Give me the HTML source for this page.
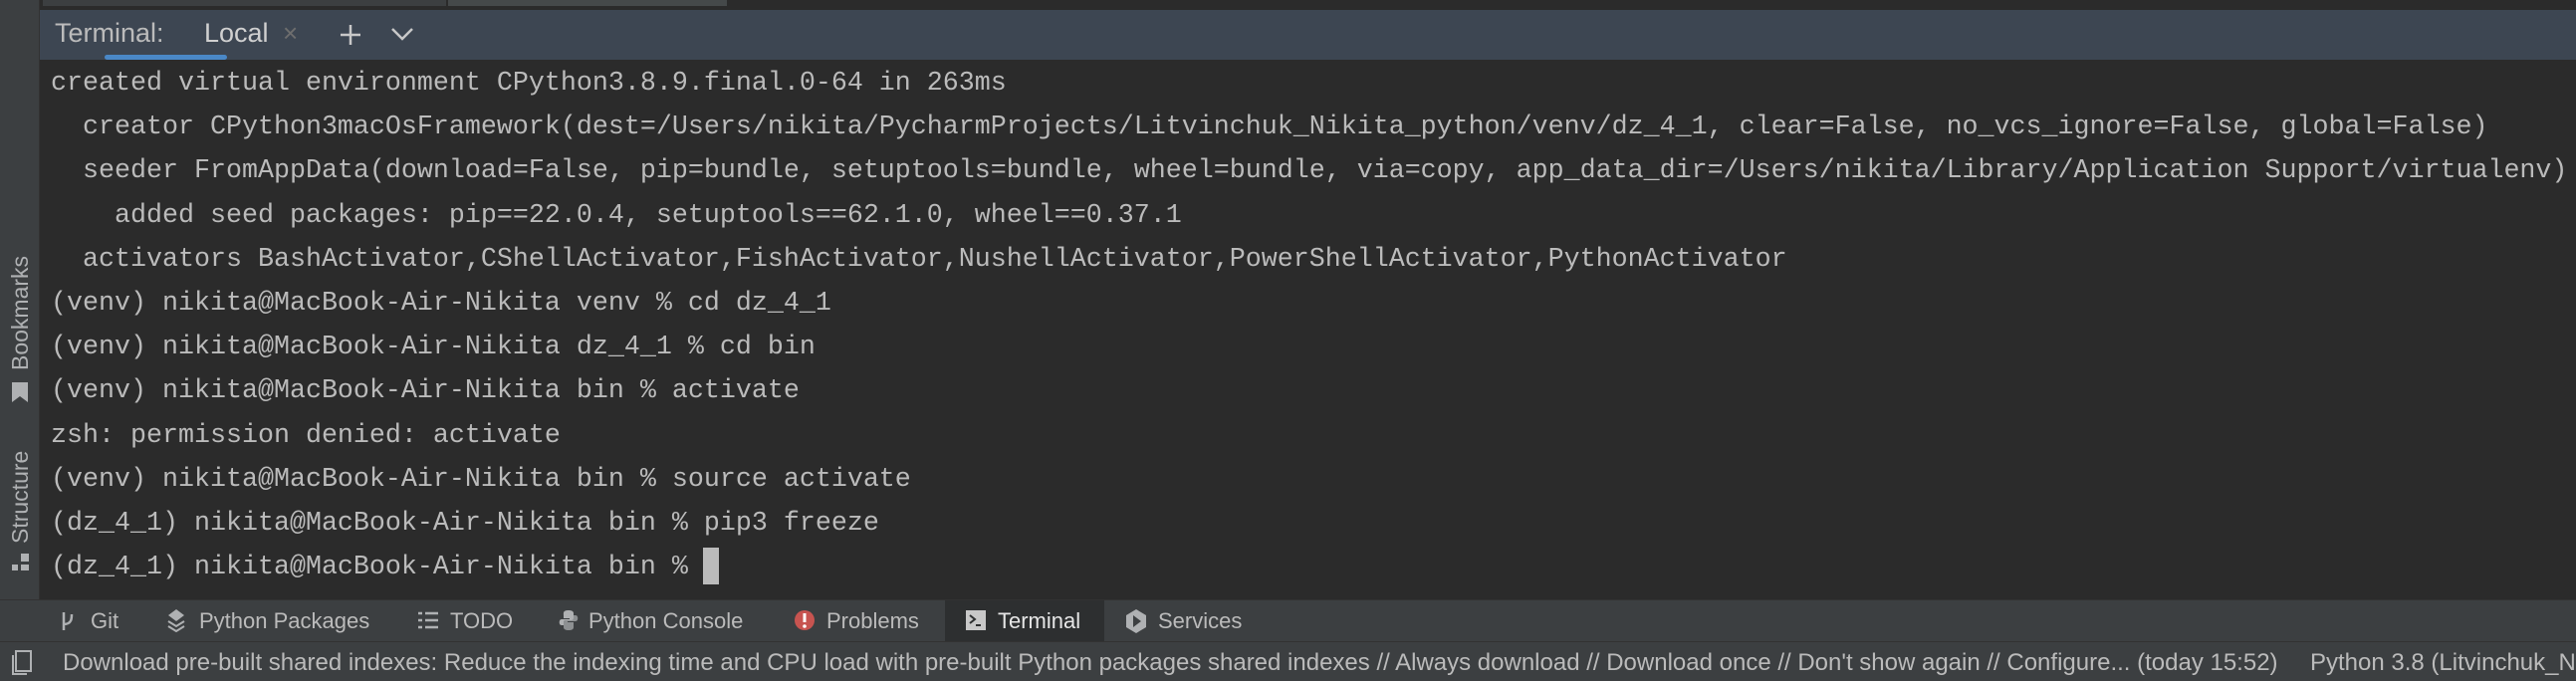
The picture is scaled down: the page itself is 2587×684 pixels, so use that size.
<!DOCTYPE html>
<html><head><meta charset="utf-8"><style>
*{margin:0;padding:0;box-sizing:border-box}
body{width:2587px;height:684px;overflow:hidden;background:#2b2b2b;position:relative;font-family:"Liberation Sans",sans-serif}
.abs{position:absolute}
#side{left:0;top:0;width:40px;height:644px;background:#3c3f41;border-right:1px solid #323232}
#top{left:40px;top:0;width:2547px;height:10px;background:#2b2b2b}
#hdr{left:40px;top:10px;width:2547px;height:50px;background:#3d4652}
.term{left:51px;top:62px;font-family:"Liberation Mono",monospace;font-size:26.67px;line-height:44.2px;color:#bbbbbb;white-space:pre}
#tool{left:0;top:602px;width:2587px;height:42px;background:#3c3f41;border-top:1px solid #323232}
#stat{left:0;top:644px;width:2587px;height:40px;background:#3c3f41;border-top:1px solid #323232;overflow:hidden}
.t{font-size:22px;color:#bbbbbb;white-space:nowrap}
.vt{transform:rotate(-90deg);transform-origin:left top;font-size:23px;color:#afb1b3;white-space:nowrap}
</style></head><body>
<div id="top" class="abs"><div class="abs" style="left:3px;top:0;width:405px;height:6px;background:#3c3f41"></div><div class="abs" style="left:410px;top:0;width:280px;height:6px;background:#45494a"></div></div>
<div id="side" class="abs">
 <div class="abs vt" style="left:7px;top:372px">Bookmarks</div>
 <svg class="abs" style="left:12px;top:384px" width="16" height="20"><path d="M0 0H16V20L8 14L0 20Z" fill="#afb1b3"/></svg>
 <div class="abs vt" style="left:7px;top:546px">Structure</div>
 <svg class="abs" style="left:12px;top:556px" width="18" height="18"><rect x="9" y="0" width="8" height="8" fill="#afb1b3"/><rect x="0" y="11" width="6" height="6" fill="#afb1b3"/><rect x="9" y="11" width="8" height="6" fill="#afb1b3"/></svg>
</div>
<div id="hdr" class="abs">
 <div class="abs t" style="left:15px;top:8px;font-size:27px">Terminal:</div>
 <div class="abs t" style="left:165px;top:8px;font-size:27px;color:#d0d0d0">Local</div>
 <div class="abs t" style="left:244px;top:8px;font-size:26px;color:#6e6e6e">×</div>
 <svg class="abs" style="left:300px;top:13px" width="24" height="24"><path d="M12 2V22M2 12H22" stroke="#c8c8c8" stroke-width="2.5"/></svg>
 <svg class="abs" style="left:352px;top:17px" width="24" height="15"><path d="M2 2L12 12L22 2" stroke="#c8c8c8" stroke-width="2.5" fill="none"/></svg>
 <div class="abs" style="left:65px;top:45px;width:123px;height:5px;background:#4a88c7;border-radius:3px"></div>
</div>
<div class="abs term">created virtual environment CPython3.8.9.final.0-64 in 263ms
  creator CPython3macOsFramework(dest=/Users/nikita/PycharmProjects/Litvinchuk_Nikita_python/venv/dz_4_1, clear=False, no_vcs_ignore=False, global=False)
  seeder FromAppData(download=False, pip=bundle, setuptools=bundle, wheel=bundle, via=copy, app_data_dir=/Users/nikita/Library/Application Support/virtualenv)
    added seed packages: pip==22.0.4, setuptools==62.1.0, wheel==0.37.1
  activators BashActivator,CShellActivator,FishActivator,NushellActivator,PowerShellActivator,PythonActivator
(venv) nikita@MacBook-Air-Nikita venv % cd dz_4_1
(venv) nikita@MacBook-Air-Nikita dz_4_1 % cd bin
(venv) nikita@MacBook-Air-Nikita bin % activate
zsh: permission denied: activate
(venv) nikita@MacBook-Air-Nikita bin % source activate
(dz_4_1) nikita@MacBook-Air-Nikita bin % pip3 freeze
(dz_4_1) nikita@MacBook-Air-Nikita bin % </div>
<div class="abs" style="left:706px;top:550px;width:16px;height:37px;background:#bbbbbb"></div>
<div id="tool" class="abs">
 <div class="abs" style="left:949px;top:0;width:160px;height:41px;background:#2d2f30"></div>
 <svg class="abs" style="left:60px;top:10px" width="16" height="22"><path d="M4 2V20M4 14C12 14 12 8 12 4" stroke="#afb1b3" stroke-width="2.5" fill="none"/></svg>
 <div class="abs t" style="left:91px;top:8px">Git</div>
 <svg class="abs" style="left:166px;top:8px" width="22" height="24"><path d="M11 1L19 7L11 13L3 7Z" fill="#afb1b3"/><path d="M3 13L11 18L19 13M3 18L11 23L19 18" stroke="#afb1b3" stroke-width="2" fill="none"/></svg>
 <div class="abs t" style="left:200px;top:8px">Python Packages</div>
 <svg class="abs" style="left:420px;top:11px" width="20" height="18"><path d="M0 2H4M7 2H20M0 9H4M7 9H20M0 16H4M7 16H20" stroke="#afb1b3" stroke-width="2.5"/></svg>
 <div class="abs t" style="left:452px;top:8px">TODO</div>
 <svg class="abs" style="left:560px;top:9px" width="22" height="22"><path d="M11 1C5 1 6 4 6 6V9H12V10H4C1 10 1 16 4 16H6V13C6 11 8 11 9 11H14C16 11 16 10 16 8V4C16 2 14 1 11 1Z" fill="#afb1b3"/><path d="M11 21C17 21 16 18 16 16V13H10V12H18C21 12 21 6 18 6H16V9C16 11 14 11 13 11H8C6 11 6 12 6 14V18C6 20 8 21 11 21Z" fill="#8d9092"/></svg>
 <div class="abs t" style="left:591px;top:8px">Python Console</div>
 <svg class="abs" style="left:797px;top:9px" width="22" height="22"><circle cx="11" cy="11" r="10" fill="#c75450"/><path d="M11 4V13" stroke="#fff" stroke-width="3"/><circle cx="11" cy="17" r="1.8" fill="#fff"/></svg>
 <div class="abs t" style="left:830px;top:8px">Problems</div>
 <svg class="abs" style="left:970px;top:10px" width="20" height="20"><rect width="20" height="20" fill="#c8c8c8"/><path d="M4 5L9 9L4 13M10 15H15" stroke="#2d2f30" stroke-width="2" fill="none"/></svg>
 <div class="abs t" style="left:1002px;top:8px;color:#e6e6e6">Terminal</div>
 <svg class="abs" style="left:1130px;top:9px" width="22" height="24"><path d="M11 0L21 6V18L11 24L1 18V6Z" fill="#afb1b3"/><path d="M8 6L16 12L8 18Z" fill="#3c3f41"/></svg>
 <div class="abs t" style="left:1163px;top:8px">Services</div>
</div>
<div id="stat" class="abs">
 <svg class="abs" style="left:12px;top:8px" width="22" height="26"><rect x="4" y="1" width="15" height="20" fill="none" stroke="#afb1b3" stroke-width="2"/><path d="M1 5V24H15" stroke="#afb1b3" stroke-width="2" fill="none"/></svg>
 <div class="abs t" style="left:63px;top:7px;font-size:24px">Download pre-built shared indexes: Reduce the indexing time and CPU load with pre-built Python packages shared indexes // Always download // Download once // Don't show again // Configure... (today 15:52)</div>
 <div class="abs t" style="left:2320px;top:7px;font-size:24px">Python 3.8 (Litvinchuk_Nik</div>
</div>
</body></html>
